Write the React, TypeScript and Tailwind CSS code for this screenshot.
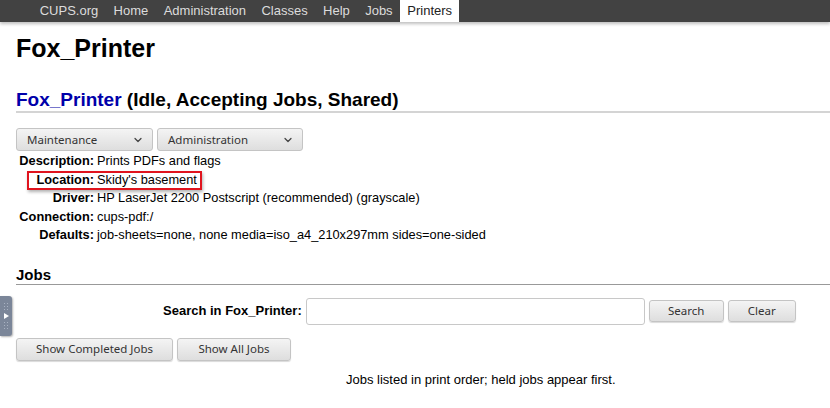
import { ChevronDown } from 'lucide-react';

const navItems = ['CUPS.org', 'Home', 'Administration', 'Classes', 'Help', 'Jobs', 'Printers'];

const btnFont = { fontFamily: '"Noto Sans", "DejaVu Sans", sans-serif' };

function GrayButton({ label, className = '' }: { label: string; className?: string }) {
  return (
    <button
      style={btnFont}
      className={`h-[22px] rounded-[3px] border border-[#c4c4c4] bg-gradient-to-b from-[#f4f4f4] to-[#dedede] text-[11.5px] text-[#333] shadow-[0_1px_1px_rgba(0,0,0,0.15)] ${className}`}
    >
      {label}
    </button>
  );
}

function SelectBox({ label, width }: { label: string; width: string }) {
  return (
    <div
      style={btnFont}
      className={`flex h-[23px] items-center justify-between rounded-[3px] border border-[#c4c4c4] bg-gradient-to-b from-[#f4f4f4] to-[#dedede] pl-[10px] pr-[8px] text-[11.5px] text-[#333] ${width}`}
    >
      <span>{label}</span>
      <ChevronDown className="h-[12px] w-[12px] text-[#444]" strokeWidth={2.5} />
    </div>
  );
}

const details: [string, string][] = [
  ['Description:', 'Prints PDFs and flags'],
  ['Location:', "Skidy's basement"],
  ['Driver:', 'HP LaserJet 2200 Postscript (recommended) (grayscale)'],
  ['Connection:', 'cups-pdf:/'],
  ['Defaults:', 'job-sheets=none, none media=iso_a4_210x297mm sides=one-sided'],
];

export default function App() {
  return (
    <div
      className="relative h-[408px] w-[830px] overflow-hidden bg-white text-black"
      style={{ fontFamily: '"Liberation Sans", Arial, sans-serif' }}
    >
      {/* Top navigation */}
      <div className="flex h-[22px] bg-[#424242] pl-[32px] shadow-[0_2px_3px_rgba(0,0,0,0.25)]">
        {navItems.map((item) =>
          item === 'Printers' ? (
            <span key={item} className="bg-white px-[7px] pt-[3px] text-[13px] leading-[16px] text-[#222]">
              {item}
            </span>
          ) : (
            <span key={item} className="px-[7.7px] pt-[3px] text-[13px] leading-[16px] text-[#dcdcdc]">
              {item}
            </span>
          )
        )}
      </div>

      <div className="pl-[16px]">
        <h1 className="mt-[11px] text-[25px] font-bold leading-[30px]">Fox_Printer</h1>

        <h2 className="mt-[26px] border-b-2 border-[#d4d4d4] text-[19px] font-bold leading-[22px]">
          <span className="text-[#0000aa]">Fox_Printer</span> (Idle, Accepting Jobs, Shared)
        </h2>

        <div className="mt-[15px] flex gap-[4px]">
          <SelectBox label="Maintenance" width="w-[137px]" />
          <SelectBox label="Administration" width="w-[146px]" />
        </div>

        <div className="grid grid-cols-[78px_1fr] gap-x-[3px] pt-[1px] text-[12.8px] leading-[18.5px]">
          {details.map(([k, v]) => (
            <div key={k} className="contents">
              <div className="relative text-right font-bold">
                {k === 'Location:' && (
                  <div className="absolute left-[11px] top-[0px] h-[19px] w-[175px] border-2 border-[#e0141e] shadow-[1px_2px_3px_rgba(0,0,0,0.3)]" />
                )}
                {k}
              </div>
              <div>{v}</div>
            </div>
          ))}
        </div>

        <h3 className="mt-[20px] border-b border-[#999] text-[15px] font-bold leading-[19px]">Jobs</h3>

        <div className="mt-[13px] flex items-center pl-[147px]">
          <span className="text-[13px] font-bold">Search in Fox_Printer:</span>
          <input className="ml-[4px] h-[27px] w-[339px] rounded-[3px] border border-[#c8c8c8] bg-white outline-none" />
          <GrayButton label="Search" className="ml-[4px] w-[75px]" />
          <GrayButton label="Clear" className="ml-[4px] w-[68px]" />
        </div>

        <div className="mt-[13px] flex gap-[4px]">
          <GrayButton label="Show Completed Jobs" className="h-[23px] w-[157px]" />
          <GrayButton label="Show All Jobs" className="h-[23px] w-[114px]" />
        </div>

        <p className="mt-[9px] pl-[330px] text-[13px]">Jobs listed in print order; held jobs appear first.</p>
      </div>

      {/* Side handle overlay */}
      <div className="absolute left-0 top-[296px] flex h-[40px] w-[12px] flex-col items-center justify-center gap-[3px] rounded-r-[3px] bg-[#7b8699] shadow-[1px_1px_2px_rgba(0,0,0,0.3)]">
        <div className="grid grid-cols-2 gap-[2px]">
          {Array.from({ length: 6 }).map((_, i) => (
            <span key={i} className="h-[1px] w-[1px] bg-[#a9b2c2]" />
          ))}
        </div>
        <svg width="5" height="6" viewBox="0 0 5 6">
          <path d="M0 0 L5 3 L0 6 Z" fill="#fff" />
        </svg>
        <div className="grid grid-cols-2 gap-[2px]">
          {Array.from({ length: 6 }).map((_, i) => (
            <span key={i} className="h-[1px] w-[1px] bg-[#a9b2c2]" />
          ))}
        </div>
      </div>
    </div>
  );
}
